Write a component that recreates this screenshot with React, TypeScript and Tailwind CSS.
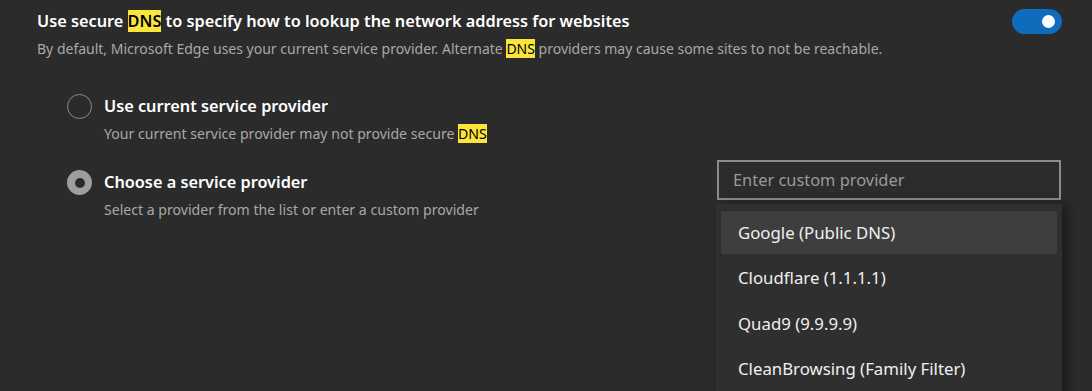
import React from 'react';

const Hl: React.FC<{ children: React.ReactNode }> = ({ children }) => (
  <span className="bg-[#fbe43c] text-black">{children}</span>
);

const providers = [
  'Google (Public DNS)',
  'Cloudflare (1.1.1.1)',
  'Quad9 (9.9.9.9)',
  'CleanBrowsing (Family Filter)',
];

const App: React.FC = () => {
  return (
    <div className="w-[1092px] h-[391px] overflow-hidden bg-[#2b2b2b] text-white font-['Noto_Sans',sans-serif]">
      <div className="pl-[37px] pr-[30px] pt-[9px]">
        {/* header row */}
        <div className="flex items-start justify-between">
          <div>
            <div className="text-[16.3px] leading-[24px] font-semibold">
              Use secure <Hl>DNS</Hl> to specify how to lookup the network address for websites
            </div>
            <div className="mt-[6px] text-[14px] leading-[19px] text-[#a8a8a8]">
              By default, Microsoft Edge uses your current service provider. Alternate <Hl>DNS</Hl> providers may cause some sites to not be reachable.
            </div>
          </div>
          <div className="w-[50px] h-[25px] rounded-full bg-[#0f6cbd] flex items-center justify-end pr-[7px]">
            <div className="w-[13px] h-[13px] rounded-full bg-white" />
          </div>
        </div>

        {/* options */}
        <div className="pl-[30px] mt-[37px]">
          <div className="flex items-start gap-[12px]">
            <div className="mt-[-1px] w-[25px] h-[25px] rounded-full border border-[#8a8a8a]" />
            <div>
              <div className="text-[16.3px] leading-[22px] font-semibold">Use current service provider</div>
              <div className="mt-[7px] text-[14.1px] leading-[19px] text-[#a8a8a8]">
                Your current service provider may not provide secure <Hl>DNS</Hl>
              </div>
            </div>
          </div>

          <div className="mt-[28px] flex items-start justify-between">
            <div className="flex items-start gap-[12px]">
              <div className="mt-[-1px] w-[25px] h-[25px] rounded-full bg-[#9e9e9e] flex items-center justify-center">
                <div className="w-[10px] h-[10px] rounded-full bg-[#2b2b2b]" />
              </div>
              <div>
                <div className="text-[16.3px] leading-[22px] font-semibold">Choose a service provider</div>
                <div className="mt-[7px] text-[14.1px] leading-[19px] text-[#a8a8a8]">
                  Select a provider from the list or enter a custom provider
                </div>
              </div>
            </div>

            <div className="relative mt-[-11px] mr-[1px]">
              <div className="w-[344px] h-[40px] border-2 border-[#8c8c8c] bg-[#2c2c2c] flex items-center pl-[14px] text-[16.4px] text-[#9a9a9a]">
                Enter custom provider
              </div>
              <div className="absolute left-[-1px] top-[44px] w-[346px] h-[200px] bg-[#2f2f2f] shadow-[6px_0_10px_rgba(0,0,0,0.35)] px-[5px] pt-[7px] flex flex-col gap-[2.5px]">
                {providers.map((p, i) => (
                  <div
                    key={p}
                    className={
                      'h-[43px] flex items-center pl-[17px] text-[16.8px] text-[#f0f0f0] rounded-[2px] ' +
                      (i === 0 ? 'bg-[#3e3e3e]' : '')
                    }
                  >
                    {p}
                  </div>
                ))}
              </div>
            </div>
          </div>
        </div>
      </div>
    </div>
  );
};

export default App;
